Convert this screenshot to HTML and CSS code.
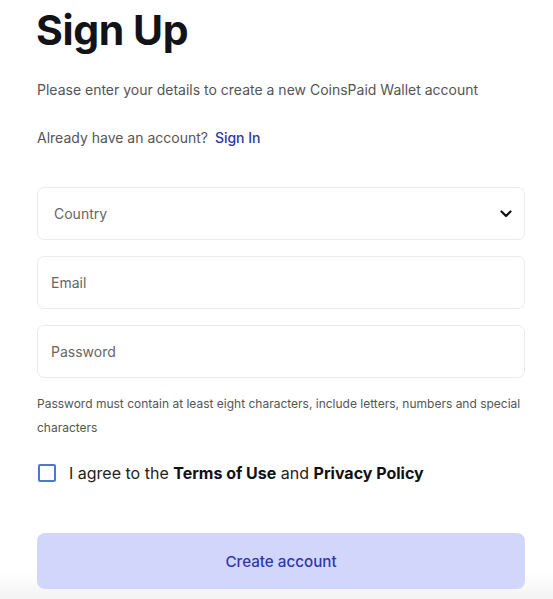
FILE: index.html
```html
<!DOCTYPE html>
<html lang="en">
<head>
<meta charset="utf-8">
<title>Sign Up</title>
<link rel="stylesheet" href="styles.css">
</head>
<body>
<main class="page">
  <h1 class="title">Sign Up</h1>
  <p class="subtitle">Please enter your details to create a new CoinsPaid Wallet account</p>
  <p class="already">Already have an account? <a class="signin" href="#">Sign In</a></p>
  <form class="form">
    <div class="fields">
      <div class="field select">
        <span class="placeholder">Country</span>
        <svg class="chev" width="12" height="8" viewBox="0 0 12 8"><path d="M1.5 1.5 L6 6 L10.5 1.5" fill="none" stroke="#111" stroke-width="2.2" stroke-linecap="round" stroke-linejoin="round"/></svg>
      </div>
      <div class="field"><span class="placeholder">Email</span></div>
      <div class="field"><span class="placeholder">Password</span></div>
    </div>
    <p class="hint">Password must contain at least eight characters, include letters, numbers and special characters</p>
    <label class="agree">
      <span class="box"></span>
      <span class="agree-text">I agree to the <b>Terms of Use</b> and <b>Privacy Policy</b></span>
    </label>
    <button type="button" class="submit">Create account</button>
  </form>
</main>
</body>
</html>
```
FILE: styles.css
```css
* { box-sizing: border-box; }
html, body { margin: 0; padding: 0; }
body {
  font-family: Inter, "Noto Sans", sans-serif;
  color: #111;
  background: linear-gradient(to bottom, #fff 0, #fff 572px, #f3f3f3 599px);
  min-height: 599px;
}
.page {
  width: 488px;
  margin-left: 37px;
  display: flex;
  flex-direction: column;
}
.title {
  margin: 5px 0 0 -1px;
  font-size: 41px;
  font-weight: 700;
  line-height: 50px;
  letter-spacing: -0.4px;
  color: #111318;
}
.subtitle {
  margin: 25px 0 0;
  font-size: 14px;
  line-height: 20px;
  color: #555;
}
.already {
  margin: 28px 0 0;
  font-size: 14px;
  line-height: 20px;
  color: #555;
}
.signin {
  margin-left: 3px;
  color: #2c36a6;
  font-weight: 500;
  text-decoration: none;
}
.form {
  margin-top: 39px;
  display: flex;
  flex-direction: column;
}
.fields {
  display: flex;
  flex-direction: column;
  gap: 16px;
}
.field {
  height: 53px;
  border: 1px solid #ebebeb;
  border-radius: 7px;
  display: flex;
  align-items: center;
  justify-content: space-between;
  padding: 0 12px 0 13px;
}
.select { padding-left: 16px; }
.placeholder {
  font-size: 14px;
  color: #666;
}
.chev { display: block; }
.hint {
  margin: 14px 0 0;
  font-size: 12px;
  line-height: 24px;
  color: #555;
}
.agree {
  margin-top: 23px;
  height: 20px;
  display: flex;
  align-items: center;
  gap: 12px;
  font-size: 16px;
  color: #222;
}
.box {
  width: 18px;
  height: 18px;
  border: 2px solid #4a78d4;
  border-radius: 2px;
  margin-left: 1px;
}
.agree-text { margin-left: 1px; }
.agree b { font-weight: 700; color: #111; }
.submit {
  margin-top: 50px;
  height: 56px;
  border: none;
  border-radius: 8px;
  background: #d2d6fb;
  color: #3036ad;
  font-family: Inter, "Noto Sans", sans-serif;
  font-size: 15.2px;
  font-weight: 500;
}
```
